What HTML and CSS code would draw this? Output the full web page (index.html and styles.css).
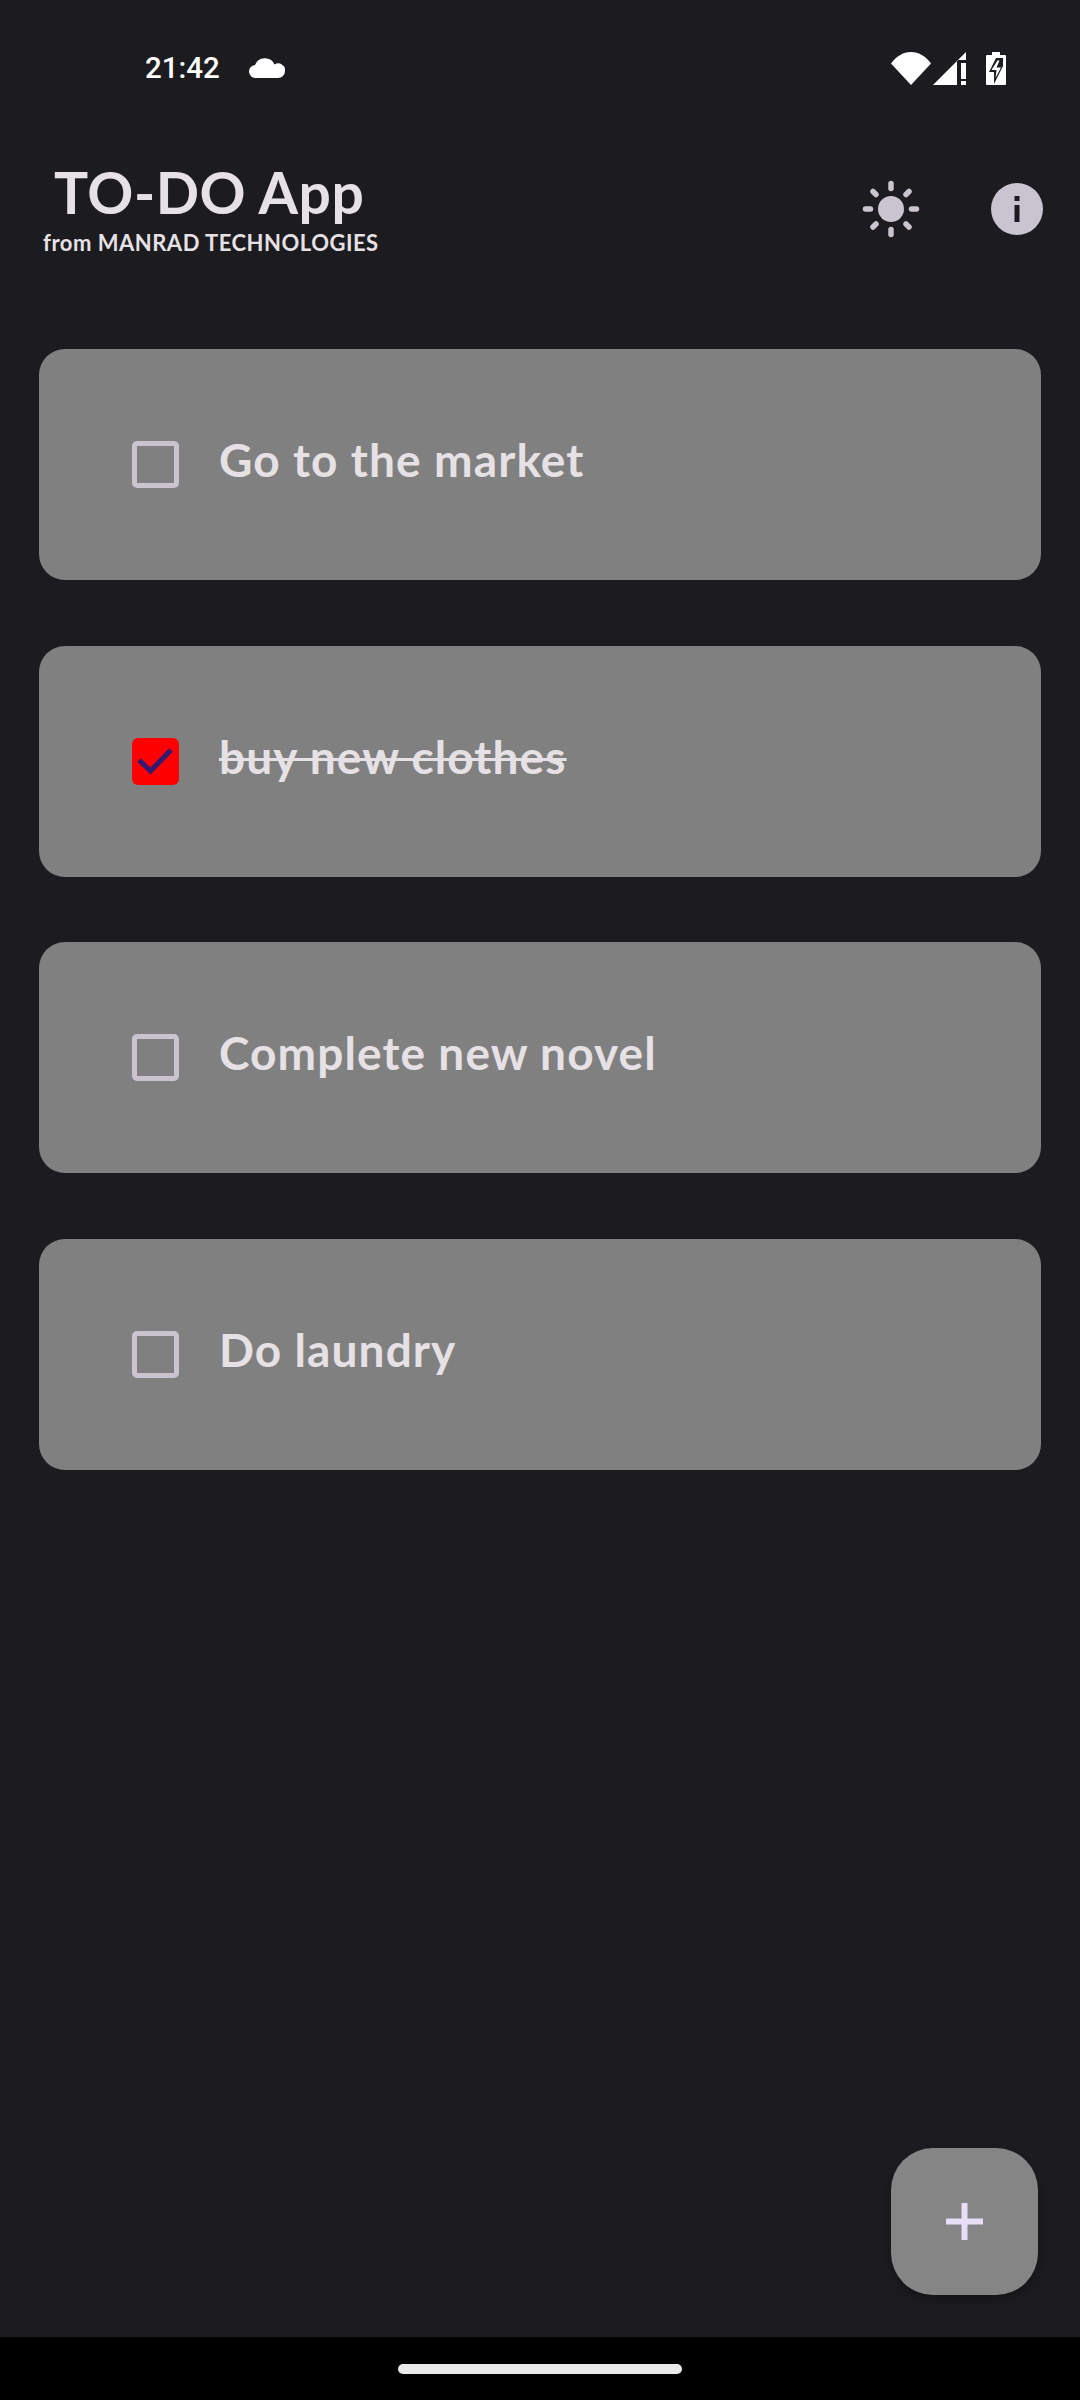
FILE: index.html
```html
<!DOCTYPE html>
<html lang="en">
<head>
    <meta charset="UTF-8">
    <title>TO-DO App</title>
    <link rel="stylesheet" href="styles.css">
</head>
<body>
    <div class="screen">
        <div class="status-bar">
            <span class="clock">21:42</span>
            <svg class="cloud" viewBox="0 0 36 20"><path d="M7 20a6.500 6.500 0 0 1-1-13 10.500 10.500 0 0 1 19.500-.5A6.800 6.800 0 0 1 36 13a7 7 0 0 1-7 7z" fill="#fff"/></svg>
            <div class="status-icons">
                <svg class="wifi" viewBox="0 0 40 33"><path d="M0 11.500C5 4.500 12 0 20 0s15 4.500 20 11.500L20 33z" fill="#fff"/></svg>
                <svg class="signal" viewBox="0 0 34 33"><path d="M0 33 33 0v8h-9v25z" fill="#fff"/><rect x="28" y="11" width="5" height="16" fill="#fff"/><rect x="28" y="29" width="5" height="4" fill="#fff"/></svg>
                <svg class="battery" viewBox="0 0 20 33"><path d="M6 0h8v3h5a1 1 0 0 1 1 1v28a1 1 0 0 1-1 1H1a1 1 0 0 1-1-1V4a1 1 0 0 1 1-1h5z" fill="#fff"/><path d="M10 6h7v8l-9 18V20H3z" fill="#1c1b1f"/><path d="M11.500 8.500 5.500 18h5L9.500 26 15 15.500h-4.500l3-7z" fill="#fff"/></svg>
            </div>
        </div>

        <header class="app-header">
            <div class="brand">
                <h1>TO-DO App</h1>
                <p>from MANRAD TECHNOLOGIES</p>
            </div>
            <svg class="sun" viewBox="0 0 58 58">
                <circle cx="29" cy="29" r="13" fill="#cac4d0"/>
                <g stroke="#cac4d0" stroke-width="5.500" stroke-linecap="round">
                    <path d="M29 3.500v5M29 49.500v5M3.500 29h5M49.500 29h5M11 11.500l3 3M44 44l3 3M11 47l3-3M44 14.500l3-3"/>
                </g>
            </svg>
            <svg class="info" viewBox="0 0 52 52">
                <circle cx="26" cy="26" r="26" fill="#cac4d0"/>
                <rect x="23.500" y="13" width="5" height="5" fill="#1c1b1f"/>
                <rect x="23.500" y="22" width="5" height="17" fill="#1c1b1f"/>
            </svg>
        </header>

        <main class="task-list">
            <div class="task">
                <span class="box"></span>
                <span class="task-text">Go to the market</span>
            </div>
            <div class="task">
                <span class="box checked">
                    <svg viewBox="0 0 47 48"><path d="M7 22l11.500 11L39 12" fill="none" stroke="#311b72" stroke-width="5"/></svg>
                </span>
                <span class="task-text done">buy new clothes</span>
            </div>
            <div class="task">
                <span class="box"></span>
                <span class="task-text">Complete new novel</span>
            </div>
            <div class="task">
                <span class="box"></span>
                <span class="task-text">Do laundry</span>
            </div>
            <button class="fab">
                <svg viewBox="0 0 37 37"><path d="M15.500 0h6v15.500H37v6H21.500V37h-6V21.500H0v-6h15.500z" fill="#e8def8"/></svg>
            </button>
        </main>

        <div class="nav-bar"><span class="nav-pill"></span></div>
    </div>
</body>
</html>
```
FILE: styles.css
```css
* {
    margin: 0;
    padding: 0;
    box-sizing: border-box;
}

body {
    font-family: "Lato", "Liberation Sans", sans-serif;
    background-color: #1c1b1f;
}

.screen {
    display: flex;
    flex-direction: column;
    height: 2400px;
}

.status-bar {
    display: flex;
    align-items: center;
    height: 136px;
    padding: 0 74px 0 145px;
}

.clock {
    font-family: "Roboto", sans-serif;
    font-size: 29.500px;
    font-weight: 500;
    color: #fff;
}

.cloud {
    width: 36px;
    height: 20px;
    margin-left: 29px;
}

.status-icons {
    display: flex;
    align-items: center;
    margin-left: auto;
}

.wifi {
    width: 40px;
    height: 33px;
}

.signal {
    width: 34px;
    height: 33px;
    margin-left: 2px;
}

.battery {
    width: 20px;
    height: 33px;
    margin-left: 19px;
}

.app-header {
    display: flex;
    align-items: center;
    height: 145px;
    padding: 0 37px 0 43px;
}

.brand {
    flex: 1;
    padding-bottom: 4px;
    color: #e6e1e5;
}

.brand h1 {
    font-size: 57px;
    font-weight: 700;
    line-height: 68px;
    letter-spacing: 0.500px;
    margin-bottom: 4px;
    padding-left: 11px;
}

.brand p {
    font-size: 22px;
    font-weight: 700;
    line-height: 26px;
    letter-spacing: 0.500px;
}

.sun {
    width: 58px;
    height: 58px;
}

.info {
    width: 52px;
    height: 52px;
    margin-left: 71px;
}

.task-list {
    flex: 1;
    position: relative;
    display: flex;
    flex-direction: column;
    gap: 65.500px;
    padding: 68px 39px 0;
}

.task {
    display: flex;
    align-items: center;
    gap: 40px;
    height: 231px;
    padding-left: 93px;
    background-color: #808080;
    border-radius: 26px;
}

.box {
    width: 47px;
    height: 47px;
    flex-shrink: 0;
    border: 5.500px solid #cac4d0;
    border-radius: 5px;
}

.box.checked {
    border: none;
    background-color: #f00;
    border-radius: 6px;
}

.box svg {
    display: block;
}

.task-text {
    font-size: 46px;
    font-weight: 700;
    line-height: 56px;
    letter-spacing: 1.100px;
    color: #e6e1e5;
    margin-bottom: 9px;
}

.task-text.done {
    text-decoration: line-through;
    text-decoration-thickness: 3px;
}

.fab {
    position: absolute;
    right: 42px;
    bottom: 42px;
    display: flex;
    align-items: center;
    justify-content: center;
    width: 147px;
    height: 147px;
    border: none;
    border-radius: 42px;
    background-color: #858585;
    box-shadow: 0 4px 10px rgba(0, 0, 0, 0.3);
}

.fab svg {
    width: 37px;
    height: 37px;
}

.nav-bar {
    display: flex;
    justify-content: center;
    align-items: center;
    height: 63px;
    background-color: #000;
}

.nav-pill {
    width: 284px;
    height: 10px;
    border-radius: 5px;
    background-color: #eaeaea;
}
```
